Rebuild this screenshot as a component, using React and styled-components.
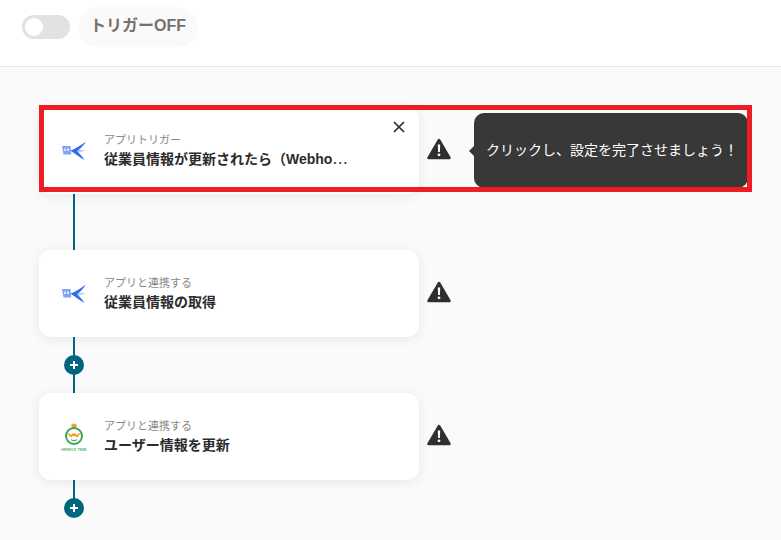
import React from "react";
import styled, { createGlobalStyle } from "styled-components";

const FONT = `"Liberation Sans", "Noto Sans CJK JP", "Noto Sans", sans-serif`;
const Global = createGlobalStyle`
  html, body { margin: 0; padding: 0; height: 100%; overflow: hidden; }
  body { font-family: ${FONT}; background: #fafafa; }
`;
const Page = styled.div`width: 781px; height: 540px; overflow: hidden; position: relative; background: #fafafa;`;
const Header = styled.header`
  height: 67px; box-sizing: border-box; background: #fff; border-bottom: 1px solid #e6e6e6;
  display: flex; align-items: flex-start; padding: 7px 0 0 22px; gap: 8px; margin-bottom: 40px;
`;
const Toggle = styled.div`
  width: 48px; height: 24px; margin-top: 8px; border-radius: 12px; background: #e2e2e2; display: flex; align-items: center; padding-left: 3px; box-sizing: border-box;
  &::before { content: ""; width: 18px; height: 18px; border-radius: 50%; background: #fff; }
`;
const TriggerLabel = styled.div`
  height: 40px; padding: 0 12px 2px; box-sizing: border-box; border-radius: 20px; background: #fafafa; color: #77706c;
  font-size: 16px; font-weight: 700; display: flex; align-items: center; line-height: 1;
`;
const Flow = styled.main`display: flex; flex-direction: column; padding-left: 39px;`;
const StepRow = styled.div`display: flex; align-items: flex-start; position: relative;`;
const Card = styled.div`
  width: 380px; height: 87px; box-sizing: border-box; background: #fff; border-radius: 12px; box-shadow: 0 2px 12px rgba(0,0,0,.08);
  display: flex; align-items: center; padding-left: 20px; position: relative; flex: none;
`;
const IconSlot = styled.div`width: 30px; height: 30px; margin-right: 15px; display: flex; align-items: center; justify-content: center; flex: none;`;
const CardText = styled.div`display: flex; flex-direction: column; min-width: 0; width: 260px; align-self: flex-start; margin-top: 25px;`;
const Kind = styled.div`font-size: 11px; line-height: 17px; color: #8a8582;`;
const Title = styled.div`font-size: 14px; line-height: 20px; font-weight: 700; color: #2b2b2b; white-space: nowrap;`;
const EllipsisMark = styled.span`font-family: "Noto Sans CJK JP", sans-serif; font-weight: 400; line-height: 0;`;
const Close = styled.div`position: absolute; top: 13px; right: 13px; width: 14px; height: 14px; line-height: 0;`;
const Warning = styled.div`width: 24px; height: 22px; margin: 31px 0 0 8px; flex: none; line-height: 0;`;
const Tooltip = styled.div`
  position: absolute; left: 435px; top: 6px; width: 274px; height: 75px; box-sizing: border-box; background: #383838; color: #fff; border-radius: 10px;
  font-size: 14px; display: flex; align-items: center; padding: 0 0 3px 12px; white-space: nowrap;
  &::before { content: ""; position: absolute; left: -5px; top: 33px; width: 0; height: 0; border-style: solid; border-width: 5px 5px 5px 0; border-color: transparent #383838 transparent transparent; }
`;
const Highlight = styled.div`position: absolute; left: 39px; top: 105px; width: 713px; height: 87px; box-sizing: border-box; border: 5px solid #ee1c25; pointer-events: none;`;
const Connector = styled.div`
  width: 71px; height: ${p => p.$h}px; position: relative; flex: none;
  &::before { content: ""; position: absolute; left: 34px; top: 0; bottom: 0; width: 2px; background: #00667f; }
`;
const PlusWrap = styled.div`position: absolute; left: 25px; top: 18px; width: 20px; height: 20px; border-radius: 50%; background: #00667f; display: flex; align-items: center; justify-content: center;`;

const Plus = () => (
  <PlusWrap>
    <svg width="10" height="10" viewBox="0 0 10 10"><path d="M5 1v8M1 5h8" stroke="#fff" strokeWidth="2" /></svg>
  </PlusWrap>
);
const BirdIcon = () => (
  <svg width="26" height="20" viewBox="0 0 26 20">
    <path d="M1 5h8.500l.8 8.500H2.500z" fill="#7fa4f2" />
    <path d="M3 7.500h2v2.500H3zM6 7.500h2v2.500H6z" fill="#dce7fc" />
    <path d="M9 9.500l6-1.500 10 1.500-8 2.200z" fill="#bcd0f7" />
    <path d="M9.500 9.800C15 7.500 20.500 3.500 25 .5 22 5.500 18.500 8.300 16 10.200 18.500 12.500 21.500 15.500 23.500 19 19 16.500 14 12.800 9.500 9.800z" fill="#2f6cee" />
  </svg>
);
const HrIcon = () => (
  <svg width="30" height="30" viewBox="0 0 30 30">
    <path d="M12.500 1.500l1.300 1L15 1l1.200 1.500 1.300-1V5.500h-5z" fill="#f59a23" />
    <circle cx="15" cy="14" r="8" fill="#fff" stroke="#3aa655" strokeWidth="2" />
    <path d="M9.500 11.500l2.500 3 2-2.200 1 1 1-1 2 2.200 2.500-3" fill="none" stroke="#f59a23" strokeWidth="1.800" />
    <path d="M12 17.800c2 1 4 1 6 0" fill="none" stroke="#3aa655" strokeWidth="1.200" />
    <text x="15" y="28.500" textAnchor="middle" fontSize="4" fontWeight="700" fill="#5fb878" fontFamily="Liberation Sans, sans-serif">HRMOS TIME</text>
  </svg>
);
const WarnIcon = () => (
  <svg width="24" height="22" viewBox="0 0 24 22">
    <path d="M12 2L22.500 20H1.500z" fill="#2f2f2f" stroke="#2f2f2f" strokeWidth="2.500" strokeLinejoin="round" />
    <path d="M10.800 6.500h2.400l-.3 7.500h-1.800z" fill="#fff" />
    <circle cx="12" cy="16.800" r="1.400" fill="#fff" />
  </svg>
);

export default function App() {
  return (
    <Page>
      <Global />
      <Header>
        <Toggle />
        <TriggerLabel>トリガーOFF</TriggerLabel>
      </Header>
      <Flow>
        <StepRow>
          <Card>
            <IconSlot><BirdIcon /></IconSlot>
            <CardText>
              <Kind>アプリトリガー</Kind>
              <Title>従業員情報が更新されたら（Webho<EllipsisMark>⋯</EllipsisMark></Title>
            </CardText>
            <Close>
              <svg width="14" height="14" viewBox="0 0 14 14"><path d="M2 2l10 10M12 2L2 12" stroke="#2b2b2b" strokeWidth="1.700" /></svg>
            </Close>
          </Card>
          <Warning><WarnIcon /></Warning>
          <Tooltip>クリックし、設定を完了させましょう！</Tooltip>
        </StepRow>
        <Connector $h={56} />
        <StepRow>
          <Card>
            <IconSlot><BirdIcon /></IconSlot>
            <CardText>
              <Kind>アプリと連携する</Kind>
              <Title>従業員情報の取得</Title>
            </CardText>
          </Card>
          <Warning><WarnIcon /></Warning>
        </StepRow>
        <Connector $h={56}><Plus /></Connector>
        <StepRow>
          <Card>
            <IconSlot><HrIcon /></IconSlot>
            <CardText>
              <Kind>アプリと連携する</Kind>
              <Title>ユーザー情報を更新</Title>
            </CardText>
          </Card>
          <Warning><WarnIcon /></Warning>
        </StepRow>
        <Connector $h={28}><Plus /></Connector>
      </Flow>
      <Highlight />
    </Page>
  );
}
